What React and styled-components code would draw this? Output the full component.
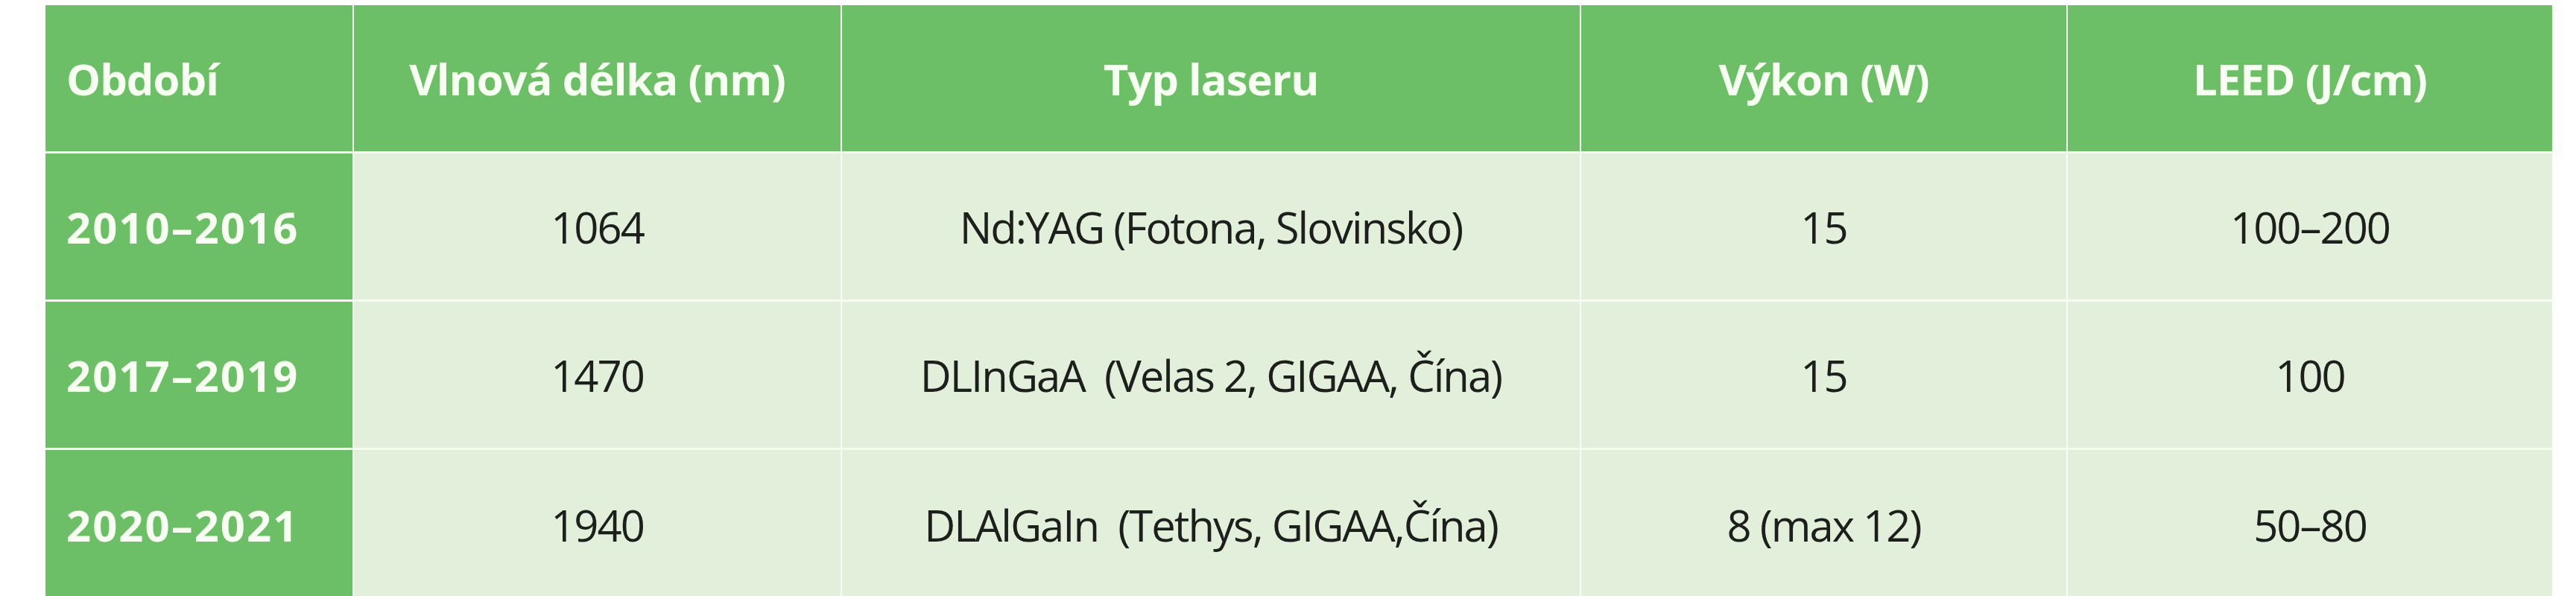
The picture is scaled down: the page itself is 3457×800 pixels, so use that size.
import React from "react";
import styled, { createGlobalStyle, css } from "styled-components";

const GlobalStyle = createGlobalStyle`
  html, body {
    margin: 0;
    padding: 0;
    background: #ffffff;
  }
  body {
    font-family: "Open Sans", "Noto Sans", "Liberation Sans", sans-serif;
  }
`;

const Page = styled.div`
  width: 3457px;
  height: 800px;
  overflow: hidden;
  padding: 7px 0 0 61px;
  box-sizing: border-box;
`;

const Table = styled.div`
  display: grid;
  grid-template-columns: 412px 653px 990px 651px 650px;
  grid-template-rows: 196px 196px 196px 200px;
  column-gap: 2px;
  row-gap: 3px;
  background: #f7fbf4;
  width: max-content;
`;

const Cell = styled.div`
  display: flex;
  align-items: center;
  justify-content: ${(props) => (props.$left ? "flex-start" : "center")};
  padding: ${(props) => (props.$left ? "0 0 0 28px" : "0")};
  font-size: 58px;
  white-space: pre;
  ${(props) =>
    props.$green
      ? css`
          background: #6cbf66;
          color: #f7fff2;
          font-weight: 700;
          letter-spacing: -1px;
        `
      : css`
          background: #e2efdb;
          color: #1d1f1c;
          font-weight: 400;
          letter-spacing: -2px;
        `}
  ${(props) =>
    props.$period &&
    css`
      letter-spacing: 2px;
    `}
`;

const headers = [
  "Období",
  "Vlnová délka (nm)",
  "Typ laseru",
  "Výkon (W)",
  "LEED (J/cm)",
];

const rows = [
  ["2010–2016", "1064", "Nd:YAG (Fotona, Slovinsko)", "15", "100–200"],
  ["2017–2019", "1470", "DLInGaA  (Velas 2, GIGAA, Čína)", "15", "100"],
  ["2020–2021", "1940", "DLAlGaIn  (Tethys, GIGAA,Čína)", "8 (max 12)", "50–80"],
];

export default function App() {
  return (
    <>
      <GlobalStyle />
      <Page>
        <Table>
          {headers.map((h, i) => (
            <Cell key={h} $green $left={i === 0}>
              {h}
            </Cell>
          ))}
          {rows.map((row) =>
            row.map((value, i) => (
              <Cell
                key={row[0] + i}
                $green={i === 0}
                $left={i === 0}
                $period={i === 0}
              >
                {value}
              </Cell>
            ))
          )}
        </Table>
      </Page>
    </>
  );
}
